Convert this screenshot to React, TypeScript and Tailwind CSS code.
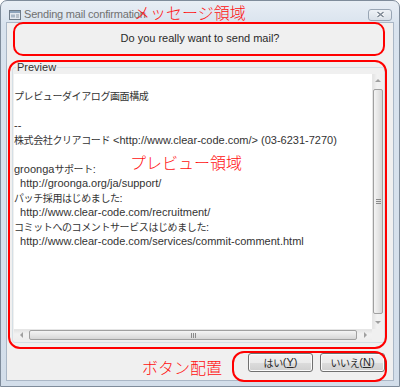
import React from "react";

function J({ children }: { children: React.ReactNode }) {
  return (
    <span className="font-['Noto_Sans_CJK_JP',sans-serif] text-[10px] tracking-[-0.4px]">
      {children}
    </span>
  );
}

function Tri({ dir }: { dir: "up" | "down" | "left" | "right" }) {
  const pts: Record<string, string> = {
    up: "0,4 3,1 6,4",
    down: "0,1 3,4 6,1",
    left: "4,0 1,3 4,6",
    right: "1,0 4,3 1,6",
  };
  const horiz = dir === "left" || dir === "right";
  return (
    <svg width={horiz ? 5 : 6} height={horiz ? 6 : 5} viewBox={horiz ? "0 0 5 6" : "0 0 6 5"}>
      <polygon points={pts[dir]} fill="#a0a0a0" />
    </svg>
  );
}

function TitleIcon() {
  return (
    <svg width="12" height="10" viewBox="0 0 12 10">
      <rect x="0.5" y="0.5" width="11" height="9" fill="#e4e9ef" stroke="#6f7b88" />
      <rect x="1" y="1" width="10" height="2" fill="#8ea4bb" />
      <rect x="2" y="4.5" width="4" height="3" fill="#a9b7c6" />
      <line x1="7" y1="5" x2="10" y2="5" stroke="#8c98a5" />
      <line x1="7" y1="7" x2="10" y2="7" stroke="#8c98a5" />
    </svg>
  );
}

const lines: React.ReactNode[] = [
  <J>プレビューダイアログ画面構成</J>,
  "",
  "--",
  <>
    <J>株式会社クリアコード</J> {"<http://www.clear-code.com/> (03-6231-7270)"}
  </>,
  "",
  <>
    groonga<J>サポート</J>:
  </>,
  "  http://groonga.org/ja/support/",
  <>
    <J>パッチ採用はじめました</J>:
  </>,
  "  http://www.clear-code.com/recruitment/",
  <>
    <J>コミットへのコメントサービスはじめました</J>:
  </>,
  "  http://www.clear-code.com/services/commit-comment.html",
];

function Btn({ jp, key2 }: { jp: string; key2: string }) {
  return (
    <div className="w-[65px] h-[19px] rounded-[3px] border border-[#707070] bg-[linear-gradient(#f2f2f2,#ebebeb_50%,#dddddd_50%,#cfcfcf)] shadow-[inset_0_0_0_1px_#fbfbfb] flex items-center justify-center text-[#2a2a2a] leading-none">
      <J>{jp}</J>
      <span className="text-[11px]">
        (<span className="underline">{key2}</span>)
      </span>
    </div>
  );
}

export default function App() {
  return (
    <div className="relative w-[400px] h-[387px] bg-white overflow-hidden font-['Liberation_Sans','Noto_Sans_CJK_JP',sans-serif]">
      <div className="flex flex-col w-[400px] h-[387px] rounded-t-[7px] border border-[#7f8c9b] bg-[linear-gradient(#e8eef5,#d9e3ee_24px,#d3deea)]">
        {/* Title bar */}
        <div className="h-[21px] shrink-0 flex items-center pt-[6px]">
          <div className="ml-[8px] flex">
            <TitleIcon />
          </div>
          <span className="ml-[3px] text-[11px] leading-[13px] text-[#707070] tracking-[-0.2px]">
            Sending mail confirmation
          </span>
          <div className="ml-auto mr-[7px] w-[24px] h-[12px] rounded-[3px] border border-[#98a5b4] bg-[linear-gradient(#eef2f6,#d9e0e8)] flex items-center justify-center">
            <svg width="9" height="7" viewBox="0 0 9 7">
              <path d="M1.5 1 L7.5 6 M7.5 1 L1.5 6" stroke="#ffffff" strokeWidth="3" />
              <path d="M1.5 1 L7.5 6 M7.5 1 L1.5 6" stroke="#7c8794" strokeWidth="1.6" />
            </svg>
          </div>
        </div>
        {/* Client area */}
        <div className="mx-[5px] mb-[5px] flex-1 border border-[#aab7c6] bg-[#f0f0f0] flex flex-col">
          <div className="h-[30px] shrink-0 flex items-center justify-center text-[11px] text-[#2a2a2a]">
            Do you really want to send mail?
          </div>
          <fieldset className="ml-[5px] mr-[8px] mt-[8px] min-w-0 border border-[#d5dfe5] rounded-[3px] px-[1px] pb-[2px]">
            <legend className="ml-[2px] px-[1px] text-[11px] leading-[13px] text-[#333333]">Preview</legend>
            <div className="h-[266px] bg-white flex flex-col">
              <div className="flex-1 flex min-h-0">
                <div className="flex-1 overflow-hidden pt-[15px] text-[11px] leading-[14.5px] text-[#333333] whitespace-pre">
                  {lines.map((l, i) => (
                    <div key={i} className="h-[14.5px]">
                      {l}
                    </div>
                  ))}
                </div>
                {/* vertical scrollbar */}
                <div className="w-[11px] flex flex-col bg-[linear-gradient(90deg,#e4e4e4,#f2f2f2_40%,#eeeeee)] border-l border-[#e6e6e6]">
                  <div className="h-[13px] flex items-center justify-center">
                    <Tri dir="up" />
                  </div>
                  <div className="flex-1 my-[2px] rounded-[2px] border border-[#a0a0a0] bg-[linear-gradient(90deg,#f4f4f4,#e6e6e6_50%,#d6d6d6)] flex flex-col items-center justify-center gap-[1px]">
                    <div className="w-[5px] h-[1px] bg-[#8a8a8a]" />
                    <div className="w-[5px] h-[1px] bg-[#8a8a8a]" />
                    <div className="w-[5px] h-[1px] bg-[#8a8a8a]" />
                  </div>
                  <div className="h-[13px] flex items-center justify-center">
                    <Tri dir="down" />
                  </div>
                </div>
              </div>
              <div className="h-[11px] flex">
                {/* horizontal scrollbar */}
                <div className="flex-1 flex bg-[linear-gradient(#e4e4e4,#f2f2f2_40%,#eeeeee)] border-t border-[#e6e6e6]">
                  <div className="w-[14px] flex items-center justify-center">
                    <Tri dir="left" />
                  </div>
                  <div className="flex-1 mx-[1px] rounded-[2px] border border-[#a0a0a0] bg-[linear-gradient(#f4f4f4,#e6e6e6_50%,#d6d6d6)] flex items-center justify-center gap-[1px]">
                    <div className="w-[1px] h-[5px] bg-[#8a8a8a]" />
                    <div className="w-[1px] h-[5px] bg-[#8a8a8a]" />
                    <div className="w-[1px] h-[5px] bg-[#8a8a8a]" />
                  </div>
                  <div className="w-[14px] flex items-center justify-center">
                    <Tri dir="right" />
                  </div>
                </div>
                <div className="w-[11px] bg-[#f0f0f0]" />
              </div>
            </div>
          </fieldset>
          <div className="mt-[10px] flex justify-end gap-[7px] pr-[8px]">
            <Btn jp="はい" key2="Y" />
            <Btn jp="いいえ" key2="N" />
          </div>
        </div>
      </div>

      {/* Red annotations */}
      <div className="pointer-events-none absolute left-[13px] top-[22px] w-[372px] h-[34px] rounded-[10px] border-2 border-[#ff0000]" />
      <div className="pointer-events-none absolute left-[8px] top-[60px] w-[379px] h-[289px] rounded-[12px] border-2 border-[#ff0000]" />
      <div className="pointer-events-none absolute left-[232px] top-[351px] w-[155px] h-[31px] rounded-[12px] border-2 border-[#ff0000]" />
      <div className="pointer-events-none absolute left-[134px] top-[4px] text-[16px] leading-[16px] font-light text-[#ff1010] font-['Noto_Sans_CJK_JP',sans-serif]">
        メッセージ領域
      </div>
      <div className="pointer-events-none absolute left-[130px] top-[154px] text-[16px] leading-[16px] font-light text-[#ff1010] font-['Noto_Sans_CJK_JP',sans-serif]">
        プレビュー領域
      </div>
      <div className="pointer-events-none absolute left-[142px] top-[359px] text-[16px] leading-[16px] font-light text-[#ff1010] font-['Noto_Sans_CJK_JP',sans-serif]">
        ボタン配置
      </div>
    </div>
  );
}
